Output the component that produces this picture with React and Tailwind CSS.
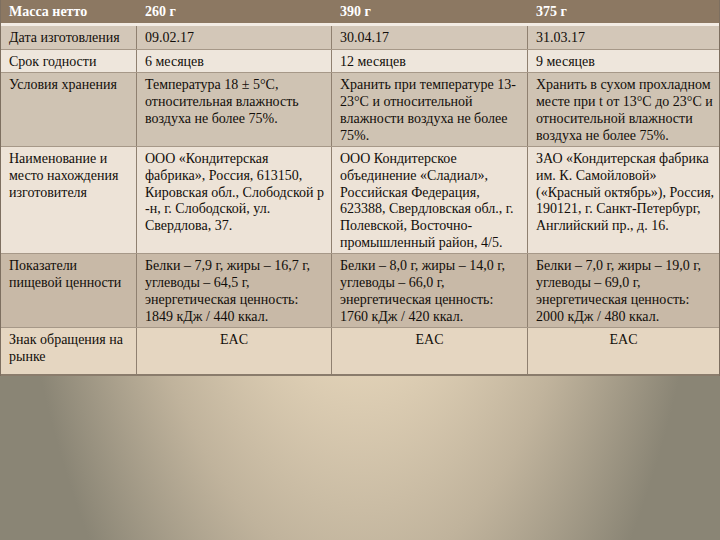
const rows = [
  {
    bg: "bg-[#d3c7b8]",
    cells: [["Дата изготовления"], ["09.02.17"], ["30.04.17"], ["31.03.17"]],
  },
  {
    bg: "bg-[#eee6dc]",
    cells: [["Срок годности"], ["6 месяцев"], ["12 месяцев"], ["9 месяцев"]],
  },
  {
    bg: "bg-[#cfc3b3]",
    cells: [
      ["Условия хранения"],
      ["Температура 18 ± 5°С,", "относительная влажность", "воздуха не более 75%."],
      ["Хранить при температуре 13-", "23°С и относительной", "влажности воздуха не более", "75%."],
      ["Хранить в сухом прохладном", "месте при t от 13°С до 23°С и", "относительной влажности", "воздуха не более 75%."],
    ],
  },
  {
    bg: "bg-[#ede3d7]",
    cells: [
      ["Наименование и", "место нахождения", "изготовителя"],
      ["ООО «Кондитерская", "фабрика», Россия, 613150,", "Кировская обл., Слободской р", "-н, г. Слободской, ул.", "Свердлова, 37."],
      ["ООО Кондитерское", "объединение «Сладиал»,", "Российская Федерация,", "623388, Свердловская обл., г.", "Полевской, Восточно-", "промышленный район, 4/5."],
      ["ЗАО «Кондитерская фабрика", "им. К. Самойловой»", "(«Красный октябрь»), Россия,", "190121, г. Санкт-Петербург,", "Английский пр., д. 16."],
    ],
  },
  {
    bg: "bg-[#c8b9a7]",
    cells: [
      ["Показатели", "пищевой ценности"],
      ["Белки – 7,9 г, жиры – 16,7 г,", "углеводы – 64,5 г,", "энергетическая ценность:", "1849 кДж / 440 ккал."],
      ["Белки – 8,0 г, жиры – 14,0 г,", "углеводы – 66,0 г,", "энергетическая ценность:", "1760 кДж / 420 ккал."],
      ["Белки – 7,0 г, жиры – 19,0 г,", "углеводы – 69,0 г,", "энергетическая ценность:", "2000 кДж / 480 ккал."],
    ],
  },
];

const cols = ["w-[136px]", "w-[195px]", "w-[196px]", "flex-1"];

function Lines({ lines }) {
  return lines.map((l, i) => (
    <div key={i} className="whitespace-nowrap">
      {l}
    </div>
  ));
}

export default function App() {
  return (
    <div
      className="w-[720px] h-[540px] overflow-hidden bg-[radial-gradient(ellipse_360px_820px_at_50%_0%,#f0e2c8_0%,#e4d4b9_42%,#c0b39c_70%,#8a8575_100%)] text-[14px] leading-[16.7px] text-[#120e0a]"
      style={{ fontFamily: '"Liberation Serif", "Times New Roman", serif' }}
    >
      <div className="border-l border-r border-[#7d6f60]">
        {/* шапка */}
        <div className="flex bg-[#8c7862] font-bold text-white border-b-[3px] border-[#f3ece4]">
          {["Масса нетто", "260 г", "390 г", "375 г"].map((t, i) => (
            <div key={i} className={`${cols[i]} shrink-0 pl-[8px] pt-[4px] h-[23px]`}>
              {t}
            </div>
          ))}
        </div>

        {rows.map((r, ri) => (
          <div key={ri} className={`flex ${r.bg} border-b border-[#a69888]`}>
            {r.cells.map((c, ci) => (
              <div
                key={ci}
                className={`${cols[ci]} shrink-0 pl-[8px] pt-[4px] pb-[2px] ${ci < 3 ? "border-r border-[#8f8070]" : ""}`}
              >
                <Lines lines={c} />
              </div>
            ))}
          </div>
        ))}

        {/* знак обращения */}
        <div className="flex bg-[#e5d6c1] border-b-2 border-[#8a7c6c] h-[48px]">
          <div className="w-[136px] shrink-0 pl-[8px] pt-[4px] border-r border-[#8f8070]">
            <Lines lines={["Знак обращения на", "рынке"]} />
          </div>
          <div className="w-[195px] shrink-0 pt-[4px] text-center border-r border-[#8f8070]">EAC</div>
          <div className="w-[196px] shrink-0 pt-[4px] text-center border-r border-[#8f8070]">EAC</div>
          <div className="flex-1 pt-[4px] text-center">EAC</div>
        </div>
      </div>
    </div>
  );
}
